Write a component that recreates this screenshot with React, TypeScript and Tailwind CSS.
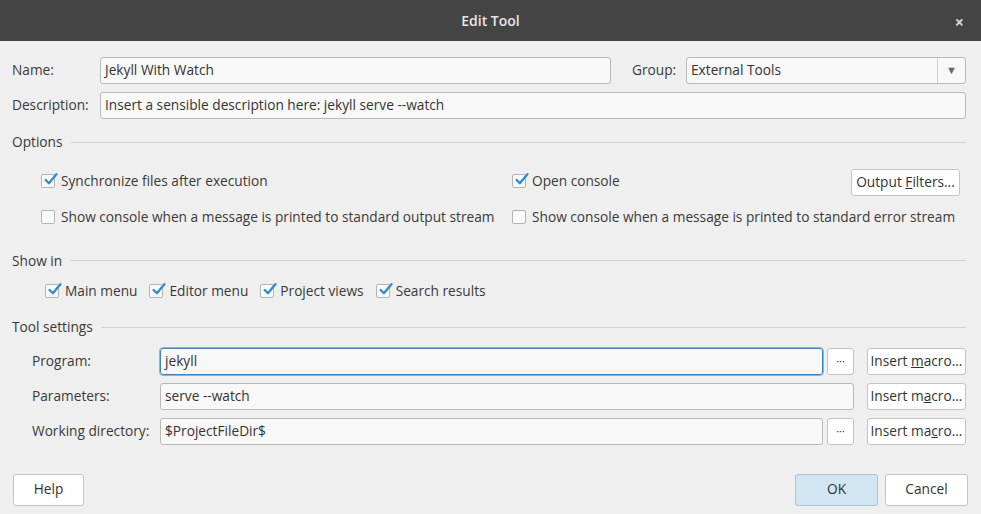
import React from "react";

const font = { fontFamily: '"Open Sans", "Noto Sans", sans-serif' };

function Check({ checked }: { checked: boolean }) {
  return (
    <span className="relative inline-flex h-[14px] w-[14px] shrink-0 items-center justify-center rounded-[2px] border border-[#b3b3b3] bg-[#fafafa]">
      {checked && (
        <svg width="15" height="15" viewBox="0 0 14 14" className="absolute left-[1px] top-[-3px]">
          <path d="M2.5 7.5 L5.5 10.5 L12.5 2" fill="none" stroke="#2f8bd3" strokeWidth="2.2" strokeLinecap="round" strokeLinejoin="round" />
        </svg>
      )}
    </span>
  );
}

function CheckLabel({ checked, label }: { checked: boolean; label: string }) {
  return (
    <span className="inline-flex items-center gap-[6px]">
      <Check checked={checked} />
      <span>{label}</span>
    </span>
  );
}

function Section({ title }: { title: string }) {
  return (
    <div className="flex items-center gap-[8px]">
      <span>{title}</span>
      <div className="h-px flex-1 bg-[#d2d2d2]" />
    </div>
  );
}

function Input({ value, focused, className }: { value: string; focused?: boolean; className?: string }) {
  return (
    <div
      className={
        "flex h-[27px] items-center rounded-[3px] bg-[#f8f8f8] px-[4px] text-[#333] " +
        (focused ? "border border-[#3a86c4] outline outline-1 outline-[#86b4dc] " : "border border-[#b9b9b9] ") +
        (className ?? "")
      }
    >
      {value}
    </div>
  );
}

function Btn({ children, className, primary }: { children: React.ReactNode; className?: string; primary?: boolean }) {
  return (
    <div
      className={
        "flex items-center justify-center rounded-[3px] border text-[#333] " +
        (primary ? "border-[#a9c3d8] bg-[#d2e5f3] " : "border-[#c4c4c4] bg-white ") +
        (className ?? "")
      }
    >
      {children}
    </div>
  );
}

export default function App() {
  return (
    <div className="h-[514px] w-[981px] overflow-hidden bg-[#efefef] text-[13.7px] text-[#3a3a3a]" style={font}>
      {/* Title bar */}
      <div className="relative flex h-[41px] items-center justify-center bg-[#444444]">
        <span className="text-[14px] font-semibold text-[#e6e6e6]">Edit Tool</span>
        <span className="absolute right-[17px] top-[10px] text-[16px] font-bold text-[#d8d8d8]">×</span>
      </div>

      <div className="pl-[12px] pr-[15px] pt-[16px]">
        {/* Name row */}
        <div className="flex h-[27px] items-center">
          <span className="w-[88px]">Name:</span>
          <Input value="Jekyll With Watch" className="w-[511px]" />
          <span className="ml-[21px] w-[54px]">Group:</span>
          <div className="flex h-[27px] flex-1 items-center rounded-[3px] border border-[#b9b9b9] bg-[#f8f8f8] text-[#333]">
            <span className="flex-1 px-[4px]">External Tools</span>
            <div className="flex h-full w-[28px] items-center justify-center border-l border-[#cfcfcf] text-[11px] text-[#666]">
              ▼
            </div>
          </div>
        </div>
        {/* Description row */}
        <div className="mt-[8px] flex h-[27px] items-center">
          <span className="w-[88px]">Description:</span>
          <Input value="Insert a sensible description here: jekyll serve --watch" className="flex-1" />
        </div>

        {/* Options */}
        <div className="mt-[13px]">
          <Section title="Options" />
        </div>
        <div className="mt-[16px] flex h-[27px] items-center pl-[29px]">
          <div className="w-[471px]">
            <CheckLabel checked label="Synchronize files after execution" />
          </div>
          <div className="flex-1">
            <CheckLabel checked label="Open console" />
          </div>
          <Btn className="mr-[6px] h-[27px] w-[109px]">
            <span>
              Output <span className="underline">F</span>ilters...
            </span>
          </Btn>
        </div>
        <div className="mt-[9px] flex h-[27px] items-center pl-[29px]">
          <div className="w-[471px]">
            <CheckLabel checked={false} label="Show console when a message is printed to standard output stream" />
          </div>
          <div className="flex-1">
            <CheckLabel checked={false} label="Show console when a message is printed to standard error stream" />
          </div>
        </div>

        {/* Show in */}
        <div className="mt-[19px]">
          <Section title="Show in" />
        </div>
        <div className="mt-[10px] flex h-[20px] items-center gap-[12px] pl-[33px]">
          <CheckLabel checked label="Main menu" />
          <CheckLabel checked label="Editor menu" />
          <CheckLabel checked label="Project views" />
          <CheckLabel checked label="Search results" />
        </div>

        {/* Tool settings */}
        <div className="mt-[16px]">
          <Section title="Tool settings" />
        </div>
        <div className="mt-[10px] flex flex-col gap-[8px] pl-[20px]">
          <div className="flex h-[27px] items-center">
            <span className="w-[128px]">Program:</span>
            <Input value="jekyll" focused className="flex-1" />
            <Btn className="ml-[4px] h-[27px] w-[27px] text-[11px]">···</Btn>
            <Btn className="ml-[13px] h-[27px] w-[99px]">
              <span>
                Insert <span className="underline">m</span>acro...
              </span>
            </Btn>
          </div>
          <div className="flex h-[27px] items-center">
            <span className="w-[128px]">Parameters:</span>
            <Input value="serve --watch" className="flex-1" />
            <Btn className="ml-[13px] h-[27px] w-[99px]">
              <span>
                Insert m<span className="underline">a</span>cro...
              </span>
            </Btn>
          </div>
          <div className="flex h-[27px] items-center">
            <span className="w-[128px]">Working directory:</span>
            <Input value="$ProjectFileDir$" className="flex-1" />
            <Btn className="ml-[4px] h-[27px] w-[27px] text-[11px]">···</Btn>
            <Btn className="ml-[13px] h-[27px] w-[99px]">
              <span>
                Insert ma<span className="underline">c</span>ro...
              </span>
            </Btn>
          </div>
        </div>

        {/* Bottom buttons */}
        <div className="-mr-[2px] mt-[29px] flex items-center">
          <Btn className="ml-[1px] h-[32px] w-[71px]">Help</Btn>
          <div className="flex-1" />
          <Btn primary className="h-[32px] w-[83px]">OK</Btn>
          <Btn className="ml-[7px] h-[32px] w-[83px]">Cancel</Btn>
        </div>
      </div>
    </div>
  );
}
